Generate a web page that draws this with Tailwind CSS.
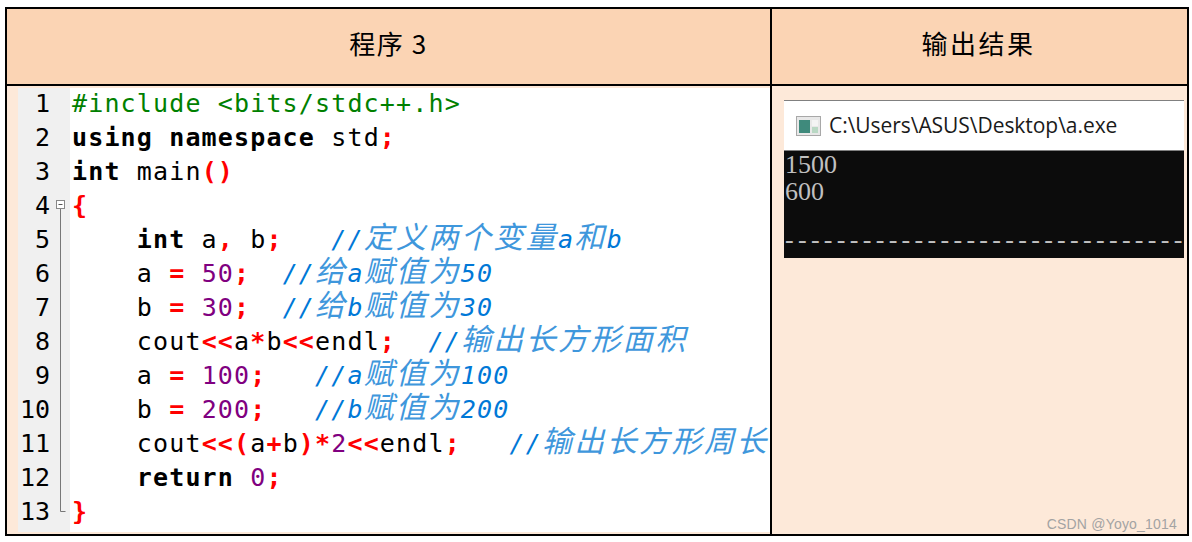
<!DOCTYPE html>
<html lang="zh-CN">
<head>
    <meta charset="UTF-8">
    <title>程序 3</title>
    <script src="https://cdn.jsdelivr.net/npm/@tailwindcss/browser@4"></script>
</head>
<body class="bg-white overflow-hidden">
<div class="ml-[5px] mt-[7px] w-[1184px] h-[529px] border-2 border-black grid grid-cols-[765px_minmax(0,1fr)] grid-rows-[77px_1fr] font-['Noto_Sans_CJK_SC',sans-serif] text-black">
    <div class="bg-[#fbd4b4] border-r-2 border-b-2 border-black flex items-center justify-center pb-[9px] text-[26px] tracking-[1.5px] whitespace-pre">程序 3</div>
    <div class="bg-[#fbd4b4] border-b-2 border-black flex items-center justify-center pb-[9px] pr-[2px] text-[26px] tracking-[2.5px]">输出结果</div>

    <!-- code cell -->
    <div class="bg-[#fde9d9] border-r-2 border-black pl-[11px] pt-[2px] pb-[2px] overflow-hidden">
        <div class="flex h-full bg-white font-['DejaVu_Sans_Mono','Noto_Sans_CJK_SC',monospace] text-[25px] tracking-[1.15px] whitespace-pre">
            <div class="relative grid auto-rows-[34px] content-start w-[52px] h-full bg-[#f0f0f0] text-right pr-[20px] leading-[32px] tracking-normal">
                <div>1</div>
                <div>2</div>
                <div>3</div>
                <div>4</div>
                <div>5</div>
                <div>6</div>
                <div>7</div>
                <div>8</div>
                <div>9</div>
                <div>10</div>
                <div>11</div>
                <div>12</div>
                <div>13</div>
                <svg class="absolute left-[37px] top-[110px]" width="12" height="316" viewBox="0 0 12 316">
                    <rect x="1.5" y="2.5" width="8" height="8" fill="#fff" stroke="#888"/>
                    <path d="M3.5 6.5h4" stroke="#555"/>
                    <path d="M5.5 11v302.500h5" fill="none" stroke="#777"/>
                </svg>
            </div>
            <div class="grid auto-rows-[34px] content-start flex-1 pl-[2px] leading-[32px]">
                <div class="text-[#008000]">#include &lt;bits/stdc++.h&gt;</div>
                <div><b>using namespace</b> std<b class="text-[#ff0000]">;</b></div>
                <div><b>int</b> main<b class="text-[#ff0000]">()</b></div>
                <div><b class="text-[#ff0000]">{</b></div>
                <div class="-mt-[4px]">    <b>int</b> a<b class="text-[#ff0000]">,</b> b<b class="text-[#ff0000]">;</b>   <i class="text-[#0078d7]">//<span class="text-[30px] leading-none tracking-[2.4px] text-[#3f97dc] font-['Noto_Sans_CJK_SC']">定义两个变量</span>a<span class="text-[30px] leading-none tracking-[2.4px] text-[#3f97dc] font-['Noto_Sans_CJK_SC']">和</span>b</i></div>
                <div class="-mt-[4px]">    a <b class="text-[#ff0000]">=</b> <span class="text-[#800080]">50</span><b class="text-[#ff0000]">;</b>  <i class="text-[#0078d7]">//<span class="text-[30px] leading-none tracking-[2.4px] text-[#3f97dc] font-['Noto_Sans_CJK_SC']">给</span>a<span class="text-[30px] leading-none tracking-[2.4px] text-[#3f97dc] font-['Noto_Sans_CJK_SC']">赋值为</span>50</i></div>
                <div class="-mt-[4px]">    b <b class="text-[#ff0000]">=</b> <span class="text-[#800080]">30</span><b class="text-[#ff0000]">;</b>  <i class="text-[#0078d7]">//<span class="text-[30px] leading-none tracking-[2.4px] text-[#3f97dc] font-['Noto_Sans_CJK_SC']">给</span>b<span class="text-[30px] leading-none tracking-[2.4px] text-[#3f97dc] font-['Noto_Sans_CJK_SC']">赋值为</span>30</i></div>
                <div class="-mt-[4px]">    cout<b class="text-[#ff0000]">&lt;&lt;</b>a<b class="text-[#ff0000]">*</b>b<b class="text-[#ff0000]">&lt;&lt;</b>endl<b class="text-[#ff0000]">;</b>  <i class="text-[#0078d7]">//<span class="text-[30px] leading-none tracking-[2.4px] text-[#3f97dc] font-['Noto_Sans_CJK_SC']">输出长方形面积</span></i></div>
                <div class="-mt-[4px]">    a <b class="text-[#ff0000]">=</b> <span class="text-[#800080]">100</span><b class="text-[#ff0000]">;</b>   <i class="text-[#0078d7]">//a<span class="text-[30px] leading-none tracking-[2.4px] text-[#3f97dc] font-['Noto_Sans_CJK_SC']">赋值为</span>100</i></div>
                <div class="-mt-[4px]">    b <b class="text-[#ff0000]">=</b> <span class="text-[#800080]">200</span><b class="text-[#ff0000]">;</b>   <i class="text-[#0078d7]">//b<span class="text-[30px] leading-none tracking-[2.4px] text-[#3f97dc] font-['Noto_Sans_CJK_SC']">赋值为</span>200</i></div>
                <div class="-mt-[4px]">    cout<b class="text-[#ff0000]">&lt;&lt;(</b>a<b class="text-[#ff0000]">+</b>b<b class="text-[#ff0000]">)*</b><span class="text-[#800080]">2</span><b class="text-[#ff0000]">&lt;&lt;</b>endl<b class="text-[#ff0000]">;</b>   <i class="text-[#0078d7]">//<span class="text-[30px] leading-none tracking-[2.4px] text-[#3f97dc] font-['Noto_Sans_CJK_SC']">输出长方形周长</span></i></div>
                <div>    <b>return</b> <span class="text-[#800080]">0</span><b class="text-[#ff0000]">;</b></div>
                <div><b class="text-[#ff0000]">}</b></div>
            </div>
        </div>
    </div>

    <!-- output cell -->
    <div class="relative min-w-0 bg-[#fde9d9] pt-[14px] pl-[12px] pr-[3px]">
        <div class="border-t border-[#808080] bg-white h-[50px] flex items-center pl-[12px] gap-[8px]">
            <svg width="25" height="22" viewBox="0 0 25 22">
                <rect x="0.500" y="1.500" width="24" height="19" fill="#e8e8e8" stroke="#a8a8a8"/>
                <rect x="3" y="5" width="11" height="13" fill="#3f8a7c"/>
                <rect x="16" y="5" width="6" height="6" fill="#f4f4f4"/>
                <rect x="16" y="12" width="6" height="6" fill="#b9d8c4"/>
            </svg>
            <span class="font-['Open_Sans',sans-serif] text-[21px] tracking-[-0.05px] text-[#1a1a1a]">C:\Users\ASUS\Desktop\a.exe</span>
        </div>
        <div class="flex flex-col h-[108px] border-t border-[#808080] bg-[#0c0c0c] text-[#c0c0c0] font-['Liberation_Serif',serif] text-[26px] leading-[27px] pl-px overflow-hidden whitespace-pre">
            <div>1500</div>
            <div>600</div>
            <div class="mt-[21px] tracking-[4.3px]">-------------------------------</div>
        </div>
        <div class="absolute right-[10px] bottom-[-1px] font-['Liberation_Sans',sans-serif] text-[14px] tracking-[0.2px] text-[#a3a3a3]">CSDN @Yoyo_1014</div>
    </div>
</div>
</body>
</html>
